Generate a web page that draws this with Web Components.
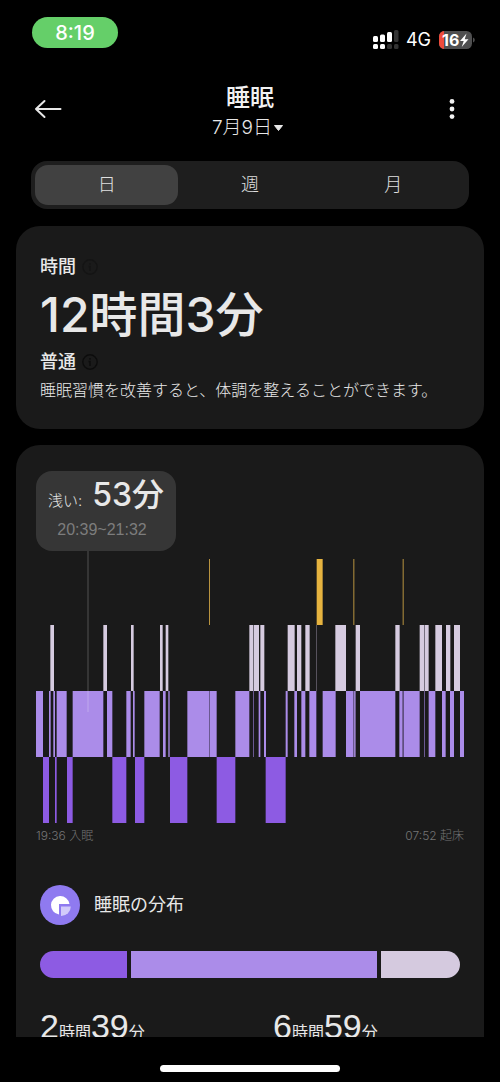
<!DOCTYPE html>
<html lang="ja">
<head>
<meta charset="utf-8">
<meta name="viewport" content="width=device-width, initial-scale=1">
<title>睡眠</title>
<style>
  html, body { margin: 0; background: #000; }
  body { color: #e8e8e8; font-family: Inter, "Noto Sans CJK JP", sans-serif; }
</style>
</head>
<body>
<sleep-app></sleep-app>

<script>
const define = (name, html, setup) => {
  const template = document.createElement('template');
  template.innerHTML = html;
  customElements.define(name, class extends HTMLElement {
    constructor() {
      super();
      this.attachShadow({ mode: 'open' }).append(template.content.cloneNode(true));
    }
    connectedCallback() { if (setup) setup(this, this.shadowRoot); }
  });
};

define('status-bar', `
  <style>
    :host { display: flex; justify-content: space-between; align-items: flex-start; height: 48px; padding: 17px 25px 0 32px; color: #fff; }
    .clock { width: 86px; height: 31px; border-radius: 16px; background: #65cf69; font-size: 20px; font-weight: 500; line-height: 32px; text-align: center; }
    .right { display: flex; align-items: center; gap: 7px; height: 20px; margin-top: 13px; font-size: 18px; line-height: 20px; }
    svg { display: block; }
    .battery { position: relative; width: 37px; height: 20px; }
    .level { position: absolute; left: 4px; top: 0; font-size: 16px; font-weight: 700; line-height: 20px; }
  </style>
  <div class="clock">8:19</div>
  <div class="right">
    <svg width="27" height="20" viewBox="0 0 27 20" aria-hidden="true">
      <g fill="#fff"><rect x="1" y="6" width="5" height="6" rx="1.5"/><rect x="8" y="4.500" width="5" height="7.500" rx="1.500"/><rect x="15" y="2" width="5" height="10" rx="1.500"/><rect x="1" y="14" width="5" height="5" rx="1.500"/><rect x="8" y="14" width="5" height="5" rx="1.500"/></g>
      <g fill="#333"><rect x="22" width="4.500" height="12" rx="1.500"/><rect x="15" y="14" width="5" height="5" rx="1.500"/><rect x="22" y="14" width="4.500" height="5" rx="1.500"/></g>
    </svg>
    <span>4G</span>
    <div class="battery">
      <svg width="37" height="20" viewBox="0 0 37 20" aria-hidden="true">
        <rect x="1" y="1" width="33" height="18" rx="5.500" fill="#4f4f50"/>
        <path d="M6 1v18A5.500 5.500 0 0 1 1 13.500v-7A5.500 5.500 0 0 1 6 1Z" fill="#ee4b3c"/>
        <path d="M35 7.500q1.800.8 1.800 2.500T35 12.500Z" fill="#4f4f50"/>
        <path d="M28.500 3.500 22 11h3.700l-2 6 6.800-7.700h-3.800Z" fill="#fff"/>
      </svg>
      <span class="level">16</span>
    </div>
  </div>`);

define('page-header', `
  <style>
    :host { display: grid; grid-template-columns: 32px 1fr 32px; align-items: center; height: 60px; padding: 16px 32px 0; }
    button { display: flex; align-items: center; justify-content: center; padding: 0; border: 0; background: none; color: inherit; font: inherit; cursor: pointer; }
    .icon { height: 32px; width: 32px; margin-bottom: 4px; }
    .title { display: flex; flex-direction: column; align-items: center; }
    h1 { margin: 0; font-size: 24px; font-weight: 500; line-height: 34px; color: #f2f2f2; }
    .date { gap: 1px; height: 26px; margin-right: 4px; font-size: 19px; font-weight: 300; line-height: 26px; }
  </style>
  <button class="icon" aria-label="戻る"><svg width="28" height="20" viewBox="0 0 28 20" fill="none" stroke="#e8e8e8" stroke-width="2" stroke-linecap="round" stroke-linejoin="round"><path d="M26.500 10H2M10.500 2 2 10l8.500 8"/></svg></button>
  <div class="title">
    <h1>睡眠</h1>
    <button class="date"><span>7月9日</span><svg width="11" height="8" viewBox="0 0 11 8" aria-hidden="true"><path d="M1.500 1.500h8L5.500 6.500Z" fill="#e8e8e8" stroke="#e8e8e8" stroke-linejoin="round"/></svg></button>
  </div>
  <button class="icon" aria-label="メニュー"><svg width="6" height="22" viewBox="0 0 6 22" fill="#f2f2f2"><circle cx="3" cy="3.400" r="2.400"/><circle cx="3" cy="11" r="2.400"/><circle cx="3" cy="18.600" r="2.400"/></svg></button>`);

define('period-tabs', `
  <style>
    :host { display: block; padding: 20px 31px 0; }
    .bar { display: grid; grid-template-columns: repeat(3, 1fr); padding: 4px; border-radius: 16px; background: #1e1e1e; }
    button { height: 40px; padding: 0; border: 0; border-radius: 13px; background: none; color: #e0e0e0; font: 300 18px/40px Inter, "Noto Sans CJK JP", sans-serif; cursor: pointer; }
    button[aria-selected="true"] { background: #414141; }
  </style>
  <div class="bar" role="tablist">
    <button role="tab" aria-selected="true">日</button>
    <button role="tab" aria-selected="false">週</button>
    <button role="tab" aria-selected="false">月</button>
  </div>`);

define('info-button', `
  <style>
    :host { display: inline-flex; color: #0c0c0c; }
    button { display: flex; padding: 0; border: 0; background: none; color: inherit; cursor: pointer; }
  </style>
  <button aria-label="詳細"><svg width="16" height="16" viewBox="0 0 16 16" fill="none" stroke="currentColor" stroke-width="1.400"><circle cx="8" cy="8" r="7.200"/><path d="M8 4v1.800M6.500 7.500H8V12"/></svg></button>`);

define('summary-card', `
  <style>
    :host { display: block; box-sizing: border-box; margin: 0 16px; padding: 27px 24px 24px; border-radius: 24px; background: #1a1a1a; }
    h2 { display: flex; align-items: center; gap: 6px; height: 28px; margin: 0; font-size: 18px; font-weight: 500; line-height: 28px; }
    .total { margin: 4px 0 3px; font-size: 48px; font-weight: 500; line-height: 60px; }
    p { margin: 0; font-size: 16px; font-weight: 300; line-height: 29px; }
    .faint { color: #141414; }
  </style>
  <h2>時間<info-button class="faint"></info-button></h2>
  <div class="total">12時間3分</div>
  <h2>普通<info-button></info-button></h2>
  <p>睡眠習慣を改善すると、体調を整えることができます。</p>`);

/* Stage bars as [start, end] on a timeline of 1284 units. */
const STAGES = [
  { y: 0, color: '#e6b33f', spans: [[842, 860]] },
  { y: 0, color: '#b8933f', spans: [[519, 522], [952, 955], [1100, 1103]] },
  { y: 66, color: '#d6cbe0', spans: [[43, 54], [202, 213], [285, 293], [372, 380], [389, 397], [640, 651], [653, 669], [673, 685], [755, 776], [783, 796], [808, 821], [898, 930], [959, 972], [1078, 1091], [1151, 1164], [1167, 1178], [1198, 1218], [1230, 1243], [1254, 1272]] },
  { y: 66, color: '#777080', spans: [[840, 842], [651, 653], [1164, 1167]] },
  { y: 132, color: '#ab8ce9', spans: [[0, 21], [39, 44], [52, 57], [62, 92], [110, 202], [213, 229], [271, 284], [291, 296], [325, 371], [381, 389], [397, 401], [454, 519], [522, 542], [598, 640], [668, 673], [684, 690], [749, 755], [775, 783], [796, 808], [820, 841], [860, 899], [930, 951], [972, 1078], [1090, 1100], [1103, 1151], [1178, 1198], [1218, 1229], [1242, 1254], [1272, 1284]] },
  { y: 132, color: '#6a5890', spans: [[519, 522], [651, 654], [951, 954], [1100, 1103], [1164, 1167]] },
  { y: 132, color: '#9a80cb', spans: [[954, 959]] },
  { y: 198, color: '#8d5be3', spans: [[21, 39], [57, 62], [93, 110], [229, 271], [297, 325], [402, 454], [542, 598], [689, 749]] }
];

define('sleep-chart', `
  <style>
    :host { display: block; position: relative; }
    .tip { box-sizing: border-box; width: 140px; height: 80px; padding-top: 4px; border-radius: 16px; background: #363636; text-align: center; }
    .stage { display: flex; align-items: baseline; justify-content: center; gap: 10px; height: 40px; font-size: 32px; font-weight: 500; line-height: 40px; white-space: nowrap; }
    .stage small { font-size: 15px; font-weight: 300; }
    .range { padding-right: 8px; font: 16px/30px "Liberation Sans", sans-serif; color: #7d7d7d; }
    svg { display: block; width: 100%; height: 264px; margin-top: 8px; }
    .cursor { position: absolute; left: 51px; top: 80px; width: 2px; height: 161px; background: #fff; opacity: .12; }
    .axis { display: flex; justify-content: space-between; font-size: 12px; font-weight: 300; line-height: 26px; color: #757575; }
  </style>
  <div class="tip">
    <div class="stage"><small>浅い:</small><span>53分</span></div>
    <div class="range">20:39~21:32</div>
  </div>
  <svg viewBox="0 0 1284 264" preserveAspectRatio="none" role="img" aria-label="睡眠ステージ"></svg>
  <div class="cursor"></div>
  <div class="axis"><span>19:36 入眠</span><span>07:52 起床</span></div>`,
  (host, root) => {
    root.querySelector('svg').innerHTML = STAGES.map(s =>
      `<path fill="${s.color}" d="${s.spans.map(([a, b]) => `M${a} ${s.y}H${b}v66H${a}Z`).join('')}"/>`).join('');
  });

define('sleep-distribution', `
  <style>
    :host { display: block; padding: 36px 4px 24px; }
    h2 { display: flex; align-items: center; gap: 14px; margin: 0; font-size: 18px; font-weight: 400; line-height: 40px; }
    .split { display: grid; grid-template-columns: 87fr 247fr 79fr; gap: 4px; height: 27px; margin-top: 26px; border-radius: 14px; overflow: hidden; }
    .deep { background: #8d5be3; } .light { background: #ab8ce9; } .rem { background: #d5cadf; }
    .stats { display: grid; grid-template-columns: 233fr 187fr; margin-top: 28px; }
    .stats div { font: 34px/40px "Liberation Sans", "Noto Sans CJK JP", sans-serif; white-space: nowrap; }
    small { font-size: 16px; }
  </style>
  <h2><svg width="40" height="40" viewBox="0 0 40 40" aria-hidden="true"><circle cx="20" cy="20" r="20" fill="#8f7af0"/><path d="M29.500 19H19v10.500A9.300 9.300 0 1 1 29.500 19Z" fill="#fff"/><path d="M21 21.500h9.800a9.500 9.500 0 0 1-9.800 9.500Z" fill="#d2cafa"/></svg>睡眠の分布</h2>
  <div class="split" role="img" aria-label="睡眠の分布"><span class="deep"></span><span class="light"></span><span class="rem"></span></div>
  <div class="stats">
    <div>2<small>時間</small>39<small>分</small></div>
    <div>6<small>時間</small>59<small>分</small></div>
  </div>`);

define('stage-card', `
  <style>
    :host { display: block; margin: 16px 16px 0; padding: 26px 20px 0; border-radius: 24px 24px 0 0; background: #1a1a1a; }
  </style>
  <slot></slot>`);

define('home-indicator', `
  <style>
    :host { display: flex; justify-content: center; align-items: flex-start; flex: none; height: 17px; padding-top: 28px; }
    span { width: 36%; height: 7px; border-radius: 4px; background: #fff; }
  </style>
  <span></span>`);

define('sleep-app', `
  <style>
    :host { display: flex; flex-direction: column; height: 100vh; overflow: hidden; }
    status-bar, page-header, period-tabs { flex: none; }
    main { flex: 1; min-height: 0; margin-top: 17px; overflow-y: auto; scrollbar-width: none; }
  </style>
  <status-bar></status-bar>
  <page-header></page-header>
  <period-tabs></period-tabs>
  <main>
    <summary-card></summary-card>
    <stage-card>
      <sleep-chart></sleep-chart>
      <sleep-distribution></sleep-distribution>
    </stage-card>
  </main>
  <home-indicator></home-indicator>`);
</script>
</body>
</html>
